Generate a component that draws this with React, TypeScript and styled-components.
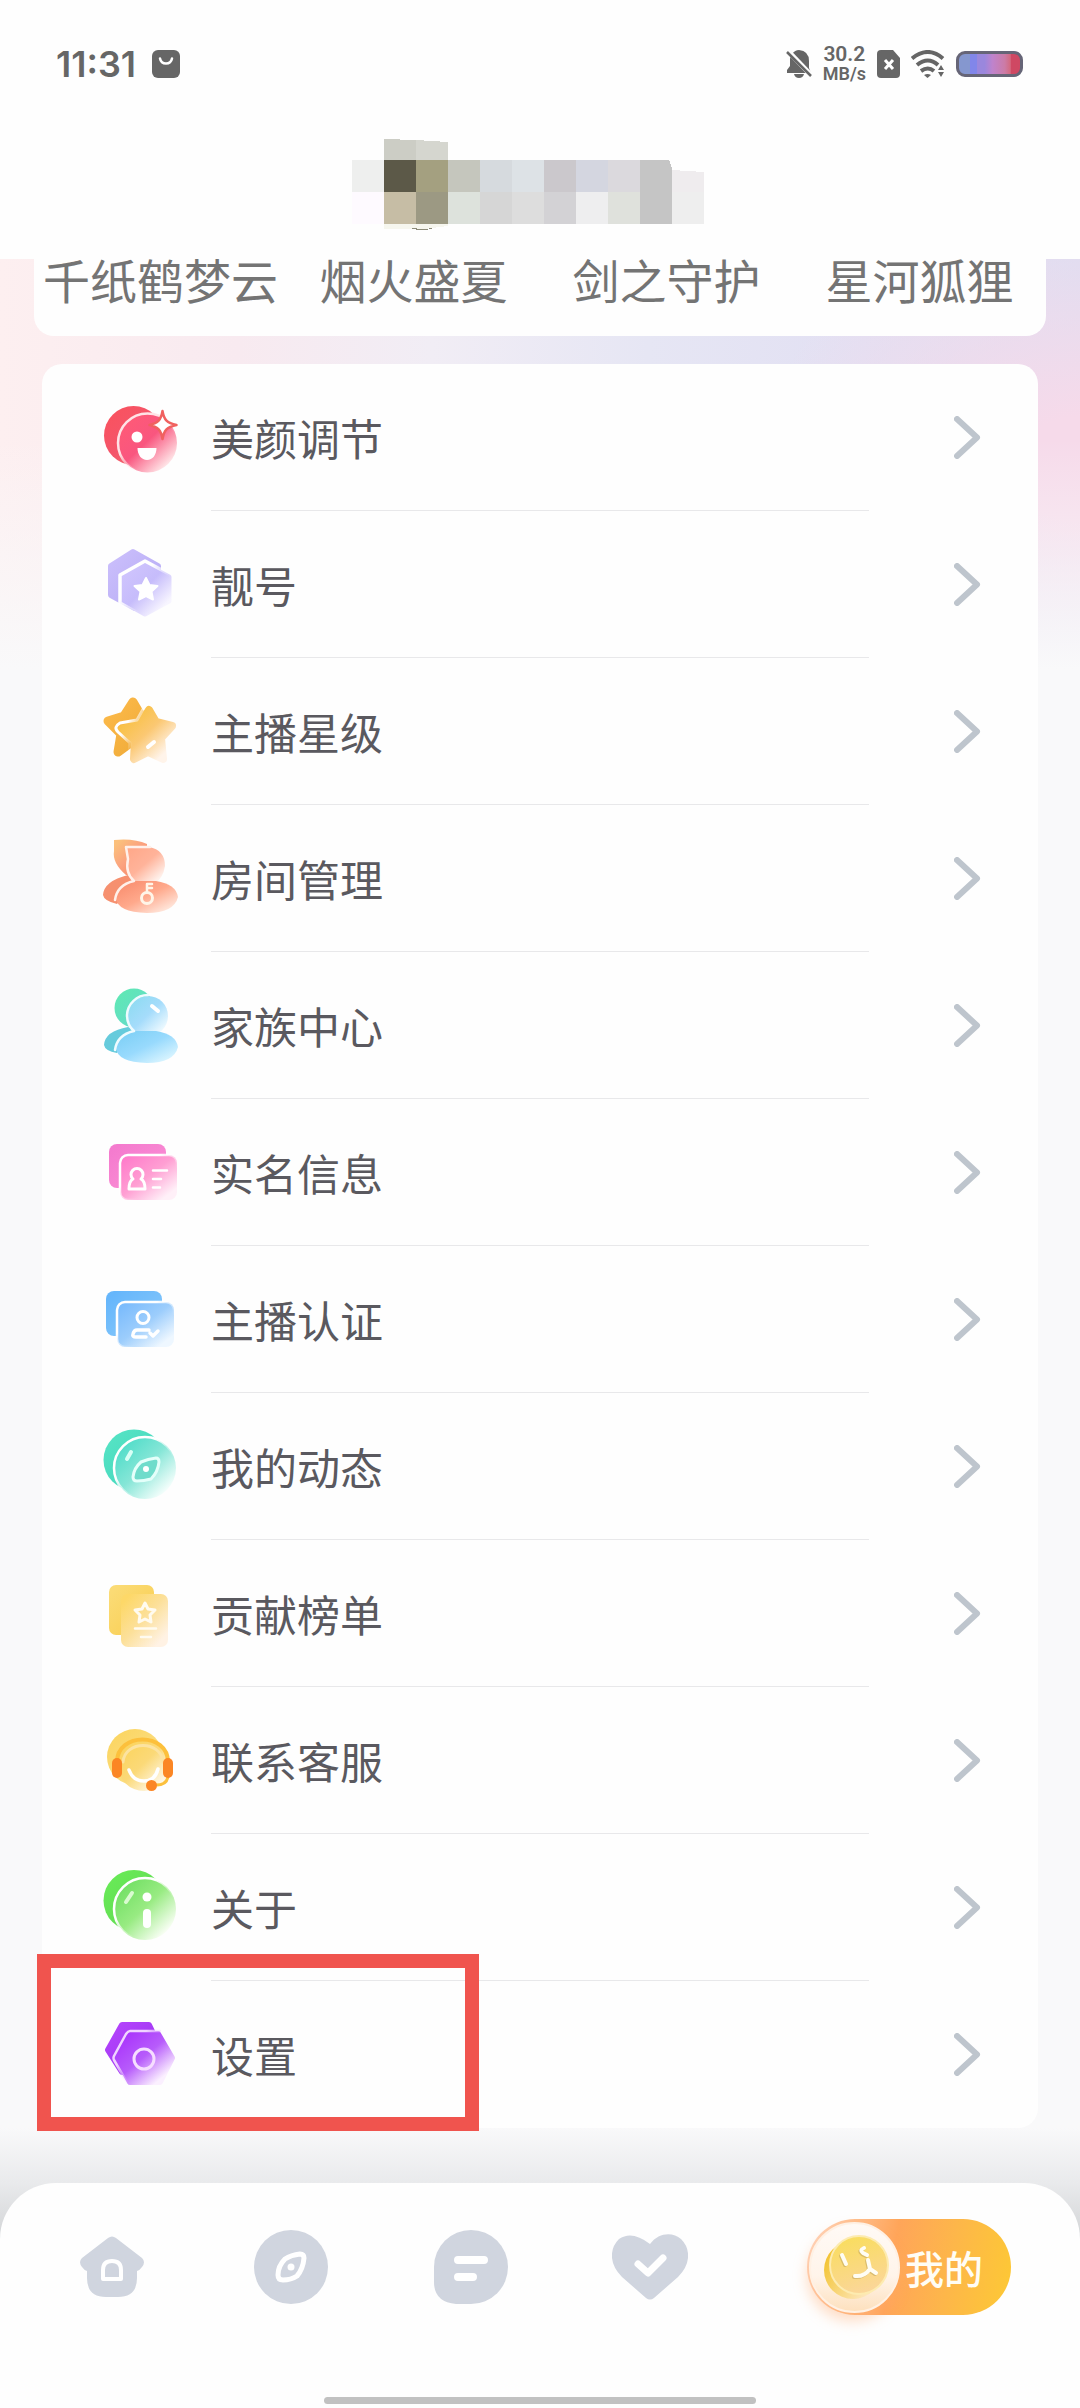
import React from "react";
import styled, { createGlobalStyle } from "styled-components";

const GlobalStyle = createGlobalStyle`
  *, *::before, *::after { box-sizing: border-box; }
  body {
    margin: 0;
    background: #fefefe;
    font-family: "Noto Sans CJK SC", "Noto Sans", sans-serif;
  }
  button {
    margin: 0;
    padding: 0;
    border: 0;
    background: none;
    font: inherit;
    color: inherit;
    text-align: left;
    cursor: pointer;
  }
  ul { list-style: none; margin: 0; padding: 0; }
  svg { display: block; flex: none; }
`;

const Page = styled.div`
  display: flex;
  flex-direction: column;
  min-height: 100vh;
`;

const Header = styled.header`
  display: flex;
  flex-direction: column;
  height: 259px;
  background: #fefefe;
`;

const StatusBar = styled.div`
  display: flex;
  align-items: center;
  justify-content: space-between;
  height: 128px;
  padding: 0 57px 0 56px;
  color: #666;
`;

const StatusGroup = styled.div<{ $gap: number }>`
  display: flex;
  align-items: center;
  gap: ${(p) => p.$gap}px;
`;

const Clock = styled.time`
  font: 600 36px/44px Inter, sans-serif;
`;

const Speed = styled.div`
  display: flex;
  flex-direction: column;
  align-items: center;
  font: 600 21px/20px Roboto, sans-serif;
`;

const SpeedUnit = styled.span`
  font-size: 18px;
`;

const Battery = styled.div`
  width: 67px;
  height: 26px;
  border: 3px solid #666577;
  border-radius: 9px;
  background: linear-gradient(90deg, #8597cf 0 18%, #8186ea 18% 30%, #9a87dd 30% 42%, #bf83cc 55%, #cc7ba6 75%, #d36a81 84%, #cf4863 86%);
`;

const TitleRow = styled.div`
  display: flex;
  justify-content: center;
  padding: 10px 24px 0 0;
`;

const Main = styled.main`
  display: flex;
  flex-direction: column;
  gap: 28px;
  background:
    linear-gradient(180deg, rgba(249, 249, 250, 0) 180px, #f9f9fa 410px) 0 0 / 100% 411px no-repeat,
    radial-gradient(320px 260px at 100% 210px, #f6daea 20%, rgba(246, 218, 234, 0) 100%) 0 0 / 100% 410px no-repeat,
    linear-gradient(90deg, #fdeff0 0%, #f8eaf0 22%, #f1edf5 40%, #e6e6f4 60%, #e2e0f3 80%, #dcdef2 100%) 0 0 / 100% 410px no-repeat,
    #f9f9fa;
`;

const GiftCard = styled.ul`
  display: grid;
  grid-template-columns: repeat(4, 1fr);
  margin: 0 34px;
  padding-bottom: 37px;
  border-radius: 0 0 20px 20px;
  background: #fefefe;
`;

const GiftName = styled.li`
  font-size: 47px;
  line-height: 40px;
  text-align: center;
  white-space: nowrap;
  color: #747474;
`;

const MenuCard = styled.ul`
  margin: 0 42px;
  border-radius: 20px;
  background: #fefefe;
`;

const MenuItem = styled.li`
  position: relative;
`;

const MenuButton = styled.button`
  display: flex;
  align-items: center;
  width: 100%;
  height: 147px;
  padding: 0 57px 0 58px;
`;

const MenuLabel = styled.span<{ $last?: boolean }>`
  display: flex;
  flex: 1;
  align-items: center;
  align-self: stretch;
  margin: 0 85px 0 31px;
  border-bottom: 1px solid ${(p) => (p.$last ? "transparent" : "#e8e8ea")};
  font-size: 43px;
  line-height: 64px;
  color: #5a595f;
`;

const Highlight = styled.span`
  position: absolute;
  top: -27px;
  left: -5px;
  width: 442px;
  height: 177px;
  border: 14px solid #f0544e;
  pointer-events: none;
`;

const Footer = styled.footer`
  flex: 1;
  display: flex;
  flex-direction: column;
  padding-top: 55px;
  background: linear-gradient(180deg, #f9f9fa 0, #e9eaec 55px, #d2d4d6 112px);
`;

const TabBar = styled.nav`
  flex: 1;
  display: flex;
  flex-direction: column;
  justify-content: space-between;
  align-items: center;
  padding-bottom: 3px;
  border-radius: 56px 56px 0 0;
  background: #fefefe;
`;

const TabList = styled.div`
  display: grid;
  grid-template-columns: repeat(4, 17fr) 32fr;
  align-self: stretch;
  height: 168px;
  padding: 0 2px 0 22px;
`;

const Tab = styled.button`
  display: flex;
  align-items: center;
  justify-content: center;
`;

const ActivePill = styled.span`
  display: flex;
  align-items: center;
  gap: 5px;
  width: 204px;
  height: 96px;
  padding-left: 2px;
  border-radius: 48px;
  background: linear-gradient(100deg, #ffd9c4 0%, #ffa559 42%, #fdb64a 68%, #fdc934 100%);
  color: #fffdf5;
  font-size: 39px;
  font-weight: 500;
  line-height: 48px;
`;

const Face = styled.span`
  display: flex;
  border-radius: 50%;
  box-shadow: -2px 8px 14px rgba(255, 170, 110, 0.4);
`;

const HomeHandle = styled.div`
  width: 40%;
  height: 7px;
  margin-bottom: 1px;
  border-radius: 4px;
  background: #c1c1c1;
`;

/* Diagonal fill shared by every layered icon */
const Fill = ({ id, from, to, mid }: { id: string; from: string; to: string; mid?: string }) => (
  <linearGradient id={id} x1="0.1" y1="0.1" x2="0.85" y2="0.88">
    <stop offset="0" stopColor={from} />
    {mid && <stop offset="0.5" stopColor={mid} />}
    <stop offset="1" stopColor={to} />
  </linearGradient>
);

const Rim = ({ id, color = "#fff" }: { id: string; color?: string }) => (
  <linearGradient id={id} x1="0" y1="0" x2="1" y2="1">
    <stop offset="0.35" stopColor={color} />
    <stop offset="0.65" stopColor={color} stopOpacity="0" />
  </linearGradient>
);

const Icon = ({ children }: { children: React.ReactNode }) => (
  <svg width="80" height="81" viewBox="0 0 80 81" fill="none" strokeLinecap="round" strokeLinejoin="round" aria-hidden="true">
    {children}
  </svg>
);

const BeautyIcon = () => (
  <Icon>
    <defs>
      <Fill id="be-a" from="#f9525f" mid="#f4556a" to="#f06a6f" />
      <Fill id="be-b" from="#ff5a76" mid="#f9567f" to="#ffeaeb" />
      <Rim id="be-r" color="#ffe3e6" />
    </defs>
    <circle cx="33.500" cy="38.500" r="29.500" fill="url(#be-a)" />
    <circle cx="47.500" cy="46" r="29.500" fill="url(#be-b)" />
    <circle cx="47.500" cy="46" r="29.500" stroke="url(#be-r)" strokeWidth="2.500" />
    <circle cx="37" cy="40" r="5.500" fill="#fff" />
    <path d="M37.500 51h19c0 7-4 12-9.500 12s-9.500-5-9.500-12Z" fill="#fff" />
    <path d="M62.500 14c1.500 9 4.500 12 14 14-9.500 2-12.500 5-14 14-1.500-9-4.500-12-13-14 8.500-2 11.500-5 13-14Z" fill="#fff" stroke="#f0615f" strokeWidth="2.500" />
  </Icon>
);

const NumberIcon = () => (
  <Icon>
    <defs>
      <Fill id="nu-a" from="#c9bdfb" to="#b8adf5" />
      <Fill id="nu-b" from="#cfc4fd" mid="#c6bcfb" to="#f7f5ff" />
      <Rim id="nu-r" />
    </defs>
    <path d="M33 8 58 22V50L35 64 11 51V22Z" fill="url(#nu-a)" stroke="url(#nu-a)" strokeWidth="6" />
    <path d="M45 20 69 33V57L45 70 22 57V33Z" fill="url(#nu-b)" stroke="url(#nu-b)" strokeWidth="5" />
    <path d="M45 17 71 31V59L45 73 20 59V31Z" stroke="url(#nu-r)" strokeWidth="3.500" />
    <path d="m46 34 3.500 7 8 1-6 5.500 1.500 8L46 52l-7 3.500 1.500-8-6-5.500 8-1Z" fill="#fff" stroke="#fff" strokeWidth="2" />
  </Icon>
);

const StarIcon = () => (
  <Icon>
    <defs>
      <Fill id="st-a" from="#fbb848" to="#f0ac3a" />
      <Fill id="st-b" from="#f8c03f" mid="#fbc873" to="#fff4ea" />
      <Rim id="st-r" />
    </defs>
    <path d="M33 11 40 23 50 26 45 38 40 50 33 50 18 61 21 43 8 30 24 25Z" fill="url(#st-a)" stroke="url(#st-a)" strokeWidth="9" />
    <path d="M49 19 56 31 72 35 61 47 63 68 48 61 34 68 35 50 22 38 40 33Z" fill="url(#st-b)" stroke="url(#st-b)" strokeWidth="8" />
    <path d="M46 13 37 29 20 32Q13 36 18 41L30 52 29 70" stroke="url(#st-r)" strokeWidth="3" />
    <path d="m48 56 6-5" stroke="#fff" strokeWidth="4" />
  </Icon>
);

const RoomIcon = () => (
  <Icon>
    <defs>
      <Fill id="ro-a" from="#fbc07c" mid="#fba27f" to="#f68a68" />
      <Fill id="ro-b" from="#ffa98b" mid="#ffb39a" to="#fff0ea" />
      <Fill id="ro-c" from="#f98f70" mid="#ffa98c" to="#ffe6db" />
      <Rim id="ro-r" />
    </defs>
    <path d="M14 2q20-2 33 4v26q-6 6-21 5-14-12-12-24Z" fill="url(#ro-a)" />
    <path d="M28 37Q4 43 3 57q1 6 14 9 12-14 26-20Z" fill="#f6906f" />
    <path d="M26 9h23q16 3 16 19-2 12-9 16H36Q24 34 27 22Z" fill="url(#ro-b)" />
    <path d="M16 60q4-14 20-17h20q20 3 22 16-4 16-31 16-30-1-31-15Z" fill="url(#ro-c)" />
    <path d="M50 9H26l2 12q-3 14 6 22-17 4-19 19" stroke="#fff0ea" strokeWidth="2.500" />
    <circle cx="47" cy="60" r="5.500" stroke="#fff5e8" strokeWidth="3" />
    <path d="M47 54v-8h5M47 50h5" stroke="#fff5e8" strokeWidth="2.500" />
  </Icon>
);

const FamilyIcon = () => (
  <Icon>
    <defs>
      <Fill id="fa-a" from="#5fe8b4" to="#66d9cc" />
      <Fill id="fa-b" from="#8fdbf2" mid="#a5dcfb" to="#effaff" />
      <Fill id="fa-c" from="#7fd0f6" mid="#98dafd" to="#d8f4ff" />
    </defs>
    <circle cx="34" cy="23" r="19.500" fill="url(#fa-a)" />
    <path d="M28 42Q5 46 4 60q1 6 13 8 12-14 26-20Z" fill="#66cbdc" />
    <circle cx="48" cy="31" r="20" fill="url(#fa-b)" />
    <path d="M16 63q4-14 20-17h20q20 3 22 16-4 16-31 16-30-1-31-15Z" fill="url(#fa-c)" />
    <path d="M15 65q2-15 19-19-7-6-7-16a21 21 0 0 1 21-20" stroke="#effbff" strokeWidth="2.500" />
    <path d="m52 21 6 5" stroke="#fff" strokeWidth="4" />
  </Icon>
);

const IdentityIcon = () => (
  <Icon>
    <defs>
      <Fill id="id-a" from="#f47bce" to="#fb8fd5" />
      <Fill id="id-b" from="#ff7ecb" mid="#ff9fd3" to="#fff0f8" />
      <Rim id="id-r" />
    </defs>
    <rect x="9" y="12" width="57" height="44" rx="8" fill="url(#id-a)" />
    <rect x="20" y="23" width="57" height="45" rx="8" fill="url(#id-b)" />
    <rect x="20" y="23" width="57" height="45" rx="8" stroke="url(#id-r)" strokeWidth="2.500" />
    <path d="M33 47a6 6 0 1 1 8 0q4 2 4 10H29q0-8 4-10Z" stroke="#fff" strokeWidth="3" />
    <path d="M53 38.500h14M53 47h8M53 55.500h7" stroke="#fff" strokeWidth="2.500" />
  </Icon>
);

const VerifyIcon = () => (
  <Icon>
    <defs>
      <Fill id="ve-a" from="#66b6fb" to="#86c8fb" />
      <Fill id="ve-b" from="#7cbcfc" mid="#9ccdfc" to="#eef7ff" />
      <Rim id="ve-r" />
    </defs>
    <rect x="6" y="12" width="56" height="45" rx="8" fill="url(#ve-a)" />
    <rect x="17" y="23" width="57" height="45" rx="8" fill="url(#ve-b)" />
    <rect x="17" y="23" width="57" height="45" rx="8" stroke="url(#ve-r)" strokeWidth="2.500" />
    <circle cx="43" cy="38.500" r="6" stroke="#fff" strokeWidth="3" />
    <path d="M46 58H36q-4 0-3-3 1-4 4-4h12M50 54l3 3 5-5" stroke="#fff" strokeWidth="3.500" />
  </Icon>
);

const MomentsIcon = () => (
  <Icon>
    <defs>
      <Fill id="mo-a" from="#55e3c4" to="#43d6bd" />
      <Fill id="mo-b" from="#4cdcc8" mid="#86e6d7" to="#f8fffd" />
      <Rim id="mo-r" />
    </defs>
    <circle cx="34" cy="34" r="30.500" fill="url(#mo-a)" />
    <circle cx="45" cy="42" r="31" fill="url(#mo-b)" />
    <circle cx="45" cy="42" r="31" stroke="url(#mo-r)" strokeWidth="2.500" />
    <path d="m27 33 4-7" stroke="#d8fff6" strokeWidth="4" />
    <path d="M56 32q3 0 3 4-1 10-8 17-7 2-14 2-4 0-4-4 1-9 8-15 7-3 15-4Z" fill="#6fdccb" stroke="#e4fffa" strokeWidth="3" />
    <circle cx="46" cy="43" r="3" fill="#fff" />
  </Icon>
);

const RankIcon = () => (
  <Icon>
    <defs>
      <Fill id="ra-a" from="#fbdb75" to="#f9cf54" />
      <Fill id="ra-b" from="#fdd868" mid="#fce09a" to="#fff2e4" />
    </defs>
    <rect x="9" y="12" width="45" height="50" rx="7" fill="url(#ra-a)" />
    <rect x="21" y="21" width="47" height="53" rx="7" fill="url(#ra-b)" />
    <path d="m45 30 3 6 7 1-5 5 1 7-6-3-6 3 1-7-5-5 7-1Z" stroke="#fffbf0" strokeWidth="3" />
    <path d="M35 55.500h21M41 64h10" stroke="#fffbf0" strokeWidth="2.500" />
  </Icon>
);

const ServiceIcon = () => (
  <Icon>
    <defs>
      <Fill id="se-a" from="#fbd561" to="#fbe08c" />
      <Fill id="se-b" from="#fbd45c" mid="#fbd978" to="#fffaf0" />
    </defs>
    <circle cx="35" cy="37" r="28" fill="url(#se-a)" />
    <circle cx="44" cy="45" r="26" fill="url(#se-b)" />
    <path d="M17 42C17 12 68 12 68 42" stroke="#fcc03c" strokeWidth="4" />
    <path d="M23 42C25 20 61 20 63 42" stroke="#fce3a0" strokeWidth="3" />
    <path d="M29 50q4 11 15 11t14-12" stroke="#fff" strokeWidth="3.500" />
    <path d="M68 56q-1 10-14 9" stroke="#fcc03c" strokeWidth="3" />
    <rect x="12" y="38" width="10" height="20" rx="5" fill="#fb8624" />
    <rect x="63" y="38" width="10" height="20" rx="5" fill="#fb8624" />
    <circle cx="51.500" cy="65.500" r="5.500" fill="#fb8624" />
  </Icon>
);

const AboutIcon = () => (
  <Icon>
    <defs>
      <Fill id="ab-a" from="#68ea57" to="#62d852" />
      <Fill id="ab-b" from="#6fdf62" mid="#98eb82" to="#fcfff8" />
      <Rim id="ab-r" />
    </defs>
    <circle cx="34" cy="33.500" r="30.500" fill="url(#ab-a)" />
    <circle cx="45" cy="42" r="31" fill="url(#ab-b)" />
    <circle cx="45" cy="42" r="31" stroke="url(#ab-r)" strokeWidth="2.500" />
    <path d="m26 35 6-9" stroke="#d9fbd0" strokeWidth="4" />
    <circle cx="47" cy="30" r="4.500" fill="#fff" />
    <path d="M47 46v11" stroke="#fff" strokeWidth="8" />
  </Icon>
);

const SettingsIcon = () => (
  <Icon>
    <defs>
      <Fill id="gear-a" from="#b242fb" to="#9d35f0" />
      <Fill id="gear-b" from="#aa37fb" mid="#b75cfb" to="#fbf0ff" />
      <Rim id="gear-r" color="#f0d4ff" />
    </defs>
    <path d="M22 11H49L58 30 48 58H22L8 36Z" fill="url(#gear-a)" stroke="url(#gear-a)" strokeWidth="6" />
    <path d="M30 20H58L72 44 60 68H30L17 44Z" fill="url(#gear-b)" stroke="url(#gear-b)" strokeWidth="6" />
    <path d="M60 17H30Q28 17 26 20L14 42Q13 44 14 46L28 70" stroke="url(#gear-r)" strokeWidth="2.500" />
    <circle cx="44" cy="45" r="10" stroke="#f6deff" strokeWidth="3" />
  </Icon>
);

const Chevron = () => (
  <svg width="27" height="43" viewBox="0 0 27 43" fill="none" aria-hidden="true">
    <path d="M3 3 23 21.500 3 40" stroke="#bec5cd" strokeWidth="6" strokeLinecap="round" strokeLinejoin="round" />
  </svg>
);

const BagIcon = () => (
  <svg width="28" height="28" viewBox="0 0 28 28" fill="none" aria-hidden="true">
    <rect width="28" height="28" rx="6" fill="#666" />
    <path d="M8 8.500q1 5 6 5t6-5" stroke="#fff" strokeWidth="2.500" strokeLinecap="round" />
  </svg>
);

const MutedBellIcon = () => (
  <svg width="26" height="28" viewBox="0 0 26 28" aria-hidden="true">
    <path d="M6 4Q9 0 13 0q10 1 10 11v7l2 5H1v-3l3-4V9q0-3 2-5Z" fill="#666" />
    <path d="M8 24h10q-1 4-5 4t-5-4Z" fill="#666" />
    <path d="m1 0 25 26" stroke="#fefefe" strokeWidth="5" />
    <path d="m1 2 24 24" stroke="#666" strokeWidth="2.500" />
  </svg>
);

const SimIcon = () => (
  <svg width="23" height="28" viewBox="0 0 23 28" fill="none" aria-hidden="true">
    <path d="M4 0h12l7 8v16q0 4-4 4H4q-4 0-4-4V4q0-4 4-4Z" fill="#666" />
    <path d="m8 10 8 9m0-9-8 9" stroke="#fff" strokeWidth="3" />
  </svg>
);

const WifiIcon = () => (
  <svg width="34" height="28" viewBox="0 0 34 28" fill="none" aria-hidden="true">
    <path d="M1 8.500q16-13 31 0" stroke="#666" strokeWidth="4" />
    <path d="M6 15q11-9 21 0" stroke="#666" strokeWidth="4" />
    <path d="M10 21q7-5 13 0" stroke="#666" strokeWidth="4" />
    <path d="M13 25q3.500-2 7 0l-3.500 3Z" fill="#666" />
    <path d="m27 20 3-5 3 5ZM27 22h6l-3 5Z" fill="#666" />
  </svg>
);

const mosaicRows = [
  ["#eeefee", "#5c5948", "#a4a080", "#c5c6bd", "#d6dade", "#dde2e6", "#cbc8cc", "#d4d6e0", "#dbd9dd", "#c5c5c5"],
  ["#fefaff", "#c6bda5", "#9c9983", "#dde2dc", "#d6d6d6", "#dddddd", "#d3d2d5", "#eeeeef", "#dfe1dc", "#c5c5c5", "#eeeeee"],
];

const MosaicTitle = () => (
  <svg width="352" height="93" viewBox="0 0 352 93" shapeRendering="crispEdges" aria-hidden="true">
    <path d="M32 1 64 2v20H32Z" fill="#cccdc5" />
    <path d="m64 2 32 2v18H64Z" fill="#d5d6cf" />
    {mosaicRows.map((row, y) =>
      row.map((color, x) => <rect key={`${y}-${x}`} x={x * 32} y={22 + y * 32} width="32" height="32" fill={color} />)
    )}
    <path d="M317 22h3v8Z" fill="#fefefe" />
    <path d="m320 32 32 2v20h-32Z" fill="#efecee" />
    <path d="M32 86h64v2l-24 3H32Z" fill="#f6f6ee" />
    <path d="M58 90q12 4 24 0l-10 1Z" fill="#8b8a78" />
  </svg>
);

const gray = "#d0d5df";

const HomeIcon = () => (
  <svg width="64" height="62" viewBox="0 0 64 62" fill="none" aria-hidden="true">
    <path d="M28 2q4-3 8 0l26 20q4 4 0 9-2 3-5 4v7q0 19-19 19H26Q7 61 7 42v-7q-3-1-5-4-4-5 0-9Z" fill={gray} />
    <path d="M23 43V34q0-9 9-9t9 9v9Z" stroke="#fff" strokeWidth="4" strokeLinejoin="round" />
  </svg>
);

const DiscoverIcon = () => (
  <svg width="74" height="74" viewBox="0 0 74 74" fill="none" aria-hidden="true">
    <circle cx="37" cy="37" r="37" fill={gray} />
    <path d="M46 24q4 0 4 4-1 11-7 18-6 4-14 4-5 0-5-5 0-9 7-16 6-4 15-5Z" stroke="#fff" strokeWidth="5" />
    <circle cx="37" cy="37" r="3.500" fill="#fff" />
  </svg>
);

const ChatIcon = () => (
  <svg width="74" height="74" viewBox="0 0 74 74" fill="none" aria-hidden="true">
    <path d="M37 0a37 37 0 0 1 0 74H22Q0 72 0 52V37A37 37 0 0 1 37 0Z" fill={gray} />
    <path d="M24 30h26M24 47h15" stroke="#fff" strokeWidth="8" strokeLinecap="round" />
  </svg>
);

const HeartIcon = () => (
  <svg width="76" height="66" viewBox="0 0 76 66" fill="none" aria-hidden="true">
    <path d="M38 10C47-2 61-2 69 5q8 8 7 19-1 10-10 19L42 64q-4 3-8 0L10 43Q1 34 0 24-1 13 7 5 20-4 38 10Z" fill={gray} />
    <path d="m26 30 10 9 15-15" stroke="#fff" strokeWidth="7" strokeLinecap="round" strokeLinejoin="round" />
  </svg>
);

const FaceIcon = () => (
  <svg width="91" height="91" viewBox="0 0 91 91" fill="none" aria-hidden="true">
    <defs>
      <linearGradient id="fc-bg" x1="0.5" y1="0" x2="0.5" y2="1">
        <stop offset="0" stopColor="#fffaf6" />
        <stop offset="0.6" stopColor="#fff4ea" />
        <stop offset="1" stopColor="#fde0bd" />
      </linearGradient>
      <linearGradient id="fc-a" x1="0" y1="0.3" x2="0.8" y2="0.8">
        <stop offset="0" stopColor="#f3c32f" />
        <stop offset="1" stopColor="#fde6ba" />
      </linearGradient>
      <linearGradient id="fc-b" x1="0.3" y1="0" x2="0.6" y2="1">
        <stop offset="0" stopColor="#f9dd5d" />
        <stop offset="1" stopColor="#fbd69b" />
      </linearGradient>
    </defs>
    <circle cx="45.500" cy="45.500" r="44.500" fill="url(#fc-bg)" stroke="#fff1e4" strokeWidth="2" />
    <circle cx="44" cy="48" r="29" fill="url(#fc-a)" />
    <circle cx="50" cy="43" r="29" fill="url(#fc-b)" stroke="#fdebb0" strokeWidth="2" />
    <path d="m32 34 4 9M54 27q-5 2-1 5l4 2M58 39l2 9 6 4M60 48q-6 8-15 7" stroke="#b9a05a" strokeOpacity="0.5" strokeWidth="4" strokeLinecap="round" />
    <path d="m33 33 4 9M55 26q-5 2-1 5l4 2M59 38l2 9 6 4M61 47q-6 8-15 7" stroke="#fffdf4" strokeWidth="4" strokeLinecap="round" strokeLinejoin="round" />
  </svg>
);

const gifts = ["千纸鹤梦云", "烟火盛夏", "剑之守护", "星河狐狸"];

const menu = [
  { label: "美颜调节", icon: BeautyIcon },
  { label: "靓号", icon: NumberIcon },
  { label: "主播星级", icon: StarIcon },
  { label: "房间管理", icon: RoomIcon },
  { label: "家族中心", icon: FamilyIcon },
  { label: "实名信息", icon: IdentityIcon },
  { label: "主播认证", icon: VerifyIcon },
  { label: "我的动态", icon: MomentsIcon },
  { label: "贡献榜单", icon: RankIcon },
  { label: "联系客服", icon: ServiceIcon },
  { label: "关于", icon: AboutIcon },
  { label: "设置", icon: SettingsIcon, highlighted: true },
];

const tabs = [HomeIcon, DiscoverIcon, ChatIcon, HeartIcon];

export default function App() {
  return (
    <Page>
      <GlobalStyle />
      <Header>
        <StatusBar>
          <StatusGroup $gap={16}>
            <Clock>11:31</Clock>
            <BagIcon />
          </StatusGroup>
          <StatusGroup $gap={11}>
            <MutedBellIcon />
            <Speed>
              <span>30.2</span>
              <SpeedUnit>MB/s</SpeedUnit>
            </Speed>
            <SimIcon />
            <WifiIcon />
            <Battery />
          </StatusGroup>
        </StatusBar>
        <TitleRow>
          <MosaicTitle />
        </TitleRow>
      </Header>
      <Main>
        <GiftCard>
          {gifts.map((name) => (
            <GiftName key={name}>{name}</GiftName>
          ))}
        </GiftCard>
        <MenuCard>
          {menu.map(({ label, icon: ItemIcon, highlighted }, i) => (
            <MenuItem key={label}>
              <MenuButton type="button">
                <ItemIcon />
                <MenuLabel $last={i === menu.length - 1}>{label}</MenuLabel>
                <Chevron />
              </MenuButton>
              {highlighted && <Highlight />}
            </MenuItem>
          ))}
        </MenuCard>
      </Main>
      <Footer>
        <TabBar>
          <TabList>
            {tabs.map((TabIcon, i) => (
              <Tab key={i} type="button">
                <TabIcon />
              </Tab>
            ))}
            <Tab type="button" aria-current="page">
              <ActivePill>
                <Face>
                  <FaceIcon />
                </Face>
                我的
              </ActivePill>
            </Tab>
          </TabList>
          <HomeHandle />
        </TabBar>
      </Footer>
    </Page>
  );
}
